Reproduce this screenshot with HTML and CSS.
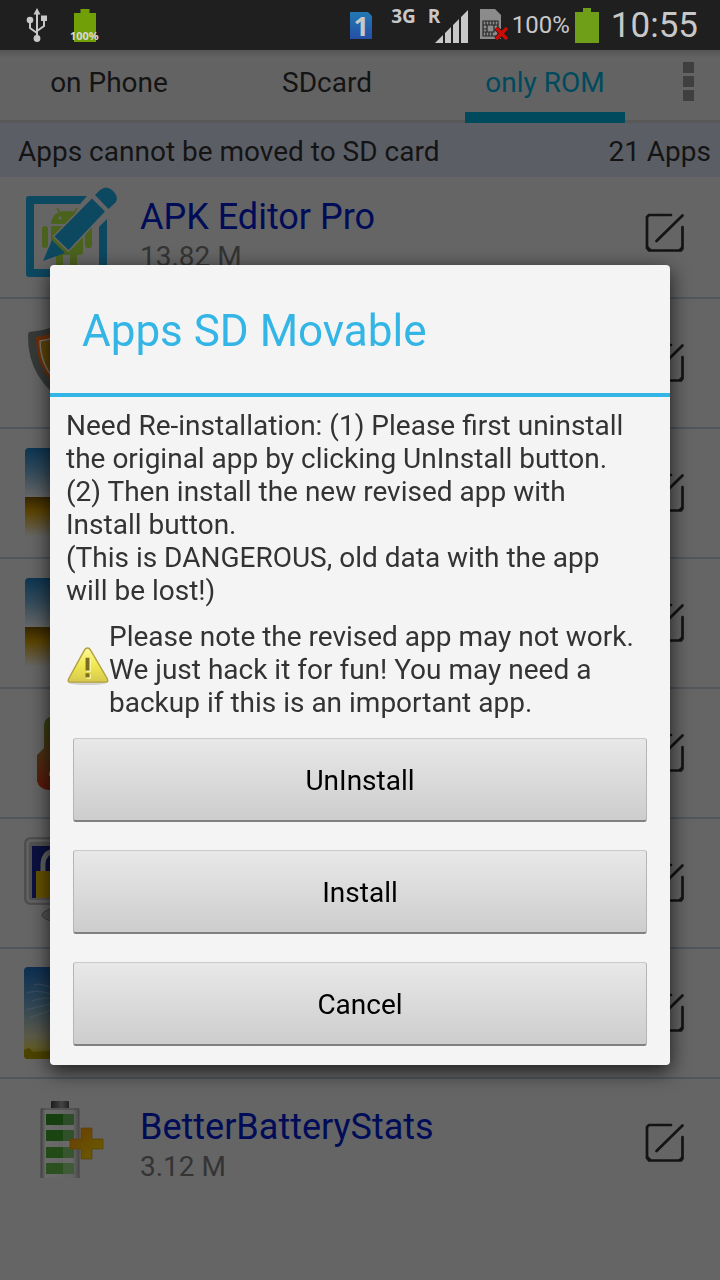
FILE: index.html
```html
<!DOCTYPE html>
<html lang="en">
<head>
    <meta charset="UTF-8">
    <meta name="viewport" content="width=device-width, initial-scale=1">
    <title>Apps SD Movable</title>
    <link rel="stylesheet" href="styles.css">
</head>
<body>
    <!-- shared symbols -->
    <svg class="defs" width="0" height="0" aria-hidden="true">
        <defs>
            <linearGradient id="g-sky" x1="0" y1="0" x2="0" y2="1">
                <stop offset="0" stop-color="#0d3552"/>
                <stop offset=".5" stop-color="#344b5b"/>
                <stop offset="1" stop-color="#666"/>
            </linearGradient>
            <linearGradient id="g-sand" x1="0" y1="0" x2="0" y2="1">
                <stop offset="0" stop-color="#352600"/>
                <stop offset=".35" stop-color="#5a4200"/>
                <stop offset="1" stop-color="#666"/>
            </linearGradient>
        </defs>
        <symbol id="i-edit" viewBox="0 0 40 40">
            <path d="M26 2H4L2 4V35L4 37.500H36L37.500 35.500V14M11.500 28L37.500 2.500" fill="none" stroke="#141414" stroke-width="2.700" stroke-linecap="round" stroke-linejoin="round"/>
            <path d="M3 33L7 37H3ZM37 33L33 37H37Z" fill="#141414"/>
        </symbol>
        <symbol id="i-photo" viewBox="0 0 96 96">
            <path d="M1 52V7Q1 3 5 3H89Q93 3 93 7V52Z" fill="url(#g-sky)"/>
            <path d="M1 52H93V88Q93 92 89 92H5Q1 92 1 88Z" fill="url(#g-sand)"/>
        </symbol>
    </svg>

    <header class="status-bar">
        <div class="status-group">
            <svg class="usb" viewBox="0 0 22 36" width="22" height="36">
                <path d="M11 6V31M11 26L4 21V14M11 24L18 19V12" fill="none" stroke="#c8c8c8" stroke-width="2"/>
                <path d="M11 1L14.500 7.500H7.500Z" fill="#c8c8c8"/>
                <circle cx="4" cy="13" r="3.300" fill="#c8c8c8"/>
                <rect x="15" y="8.500" width="6" height="5.500" fill="#c8c8c8"/>
                <circle cx="11" cy="31.500" r="3.400" fill="#c8c8c8"/>
            </svg>
            <div class="charge">
                <svg viewBox="0 0 22 33" width="22" height="33"><path d="M6.500 0H15.500V4H22V33H0V4H6.500Z" fill="#709f07"/></svg>
                <span>100%</span>
            </div>
        </div>
        <div class="status-group status-right">
            <div class="sim-one">
                <svg viewBox="0 0 22 29" width="22" height="29">
                    <defs><linearGradient id="g-sim" x1="0" y1="0" x2="0" y2="1"><stop offset="0" stop-color="#2278b4"/><stop offset="1" stop-color="#254fa6"/></linearGradient></defs>
                    <path d="M0 1H18L22 5V28H0Z" fill="url(#g-sim)"/>
                </svg>
                <span>1</span>
            </div>
            <span class="net">3G</span>
            <div class="signal">
                <span class="net">R</span>
                <svg viewBox="0 0 33 33" width="33" height="33">
                    <path d="M0 33L8 25V33ZM10 23L16 17V33H10ZM18 15L24 9V33H18ZM26 7L33 0V33H26Z" fill="#c8c8c8"/>
                </svg>
            </div>
            <svg class="sim-off" viewBox="0 0 28 32" width="28" height="32">
                <path d="M0 0H15L21 6V30H0Z" fill="#8b8b8b"/>
                <path d="M3 12H18V27H3ZM7 16V23H14V16ZM6 12V16M9 12V16M12 12V16M15 12V16M6 23V27M9 23V27M12 23V27M3 16H7M3 20H7M3 23H7M14 16H18" fill="none" stroke="#262626" stroke-width="1.200"/>
                <path d="M16 19L27 30M27 19L16 30" stroke="#1f1f1f" stroke-width="5"/>
                <path d="M16 19L27 30M27 19L16 30" stroke="#cb0b06" stroke-width="3.500"/>
            </svg>
            <span class="percent">100%</span>
            <svg class="battery" viewBox="0 0 24 35" width="24" height="35"><path d="M8 0H16V4H24V35H0V4H8Z" fill="#6f9f18"/></svg>
            <time class="clock">10:55</time>
        </div>
    </header>

    <nav class="tab-bar">
        <div class="tabs">
            <a href="#phone">on Phone</a>
            <a href="#sdcard">SDcard</a>
            <a href="#rom" class="active">only ROM</a>
        </div>
        <button class="overflow" type="button" aria-label="More options"><i></i><i></i><i></i></button>
    </nav>

    <main>
        <div class="summary">
            <span>Apps cannot be moved to SD card</span>
            <span>21 Apps</span>
        </div>
        <ul class="app-list">
            <li>
                <svg class="app-icon" viewBox="0 0 96 96">
                    <g fill="#4b621d">
                        <path d="M27 39Q28 26 43 26Q57 26 58 39Z"/>
                        <path d="M33 23L37 29M53 23L49 29" stroke="#4b621d" stroke-width="1.500"/>
                        <rect x="18" y="41" width="6" height="22" rx="3"/>
                        <rect x="61" y="41" width="7" height="22" rx="3"/>
                        <path d="M27 41H59V67Q59 70 56 70H53V84H46V70H39V84H32V70H30Q27 70 27 67Z"/>
                    </g>
                    <circle cx="36" cy="33" r="1.500" fill="#666"/>
                    <path d="M63 11H5Q2 11 2 14V89Q2 92 5 92H80Q83 92 83 89V34L75 42V84H10V19H56Z" fill="#0d4861"/>
                    <path d="M30.500 51.500L68 13.500L81 26.500L44.500 65Z" fill="#0d4861" stroke="#666" stroke-width="3" paint-order="stroke"/>
                    <path d="M19 76L28 55L41 68Z" fill="#0d4861"/>
                    <path d="M71 10L76 5Q82 0 88 5Q95 11 92 17L84.500 24Z" fill="#0d4861"/>
                </svg>
                <div class="app-text"><a href="#apk-editor">APK Editor Pro</a><span>13.82 M</span></div>
                <button class="edit" type="button" aria-label="Edit"><svg width="40" height="40"><use href="#i-edit"/></svg></button>
            </li>
            <li>
                <svg class="app-icon" viewBox="0 0 96 96">
                    <path d="M5 17Q18 16 30 12L48 3L66 12Q78 16 91 17Q93 65 48 92Q3 66 4 20Z" fill="#363a37"/>
                    <path d="M12 22Q28 20 48 10Q68 20 84 22Q84 62 48 85Q12 62 12 22Z" fill="#6f3009"/>
                    <path d="M16 26Q31 24 48 15Q65 24 80 26Q80 59 48 79Q16 59 16 26Z" fill="#5d4408" stroke="#77736c" stroke-width="1.500"/>
                </svg>
                <button class="edit" type="button" aria-label="Edit"><svg width="40" height="40"><use href="#i-edit"/></svg></button>
            </li>
            <li>
                <svg class="app-icon"><use href="#i-photo"/></svg>
                <button class="edit" type="button" aria-label="Edit"><svg width="40" height="40"><use href="#i-edit"/></svg></button>
            </li>
            <li>
                <svg class="app-icon"><use href="#i-photo"/></svg>
                <button class="edit" type="button" aria-label="Edit"><svg width="40" height="40"><use href="#i-edit"/></svg></button>
            </li>
            <li>
                <svg class="app-icon" viewBox="0 0 96 96">
                    <defs><linearGradient id="g-fruit" x1="0" y1="0" x2="0" y2="1"><stop offset="0" stop-color="#34450f"/><stop offset=".5" stop-color="#4b3012"/><stop offset="1" stop-color="#5c170a"/></linearGradient></defs>
                    <path d="M20 20Q20 14 26 12H66Q76 14 76 22V43L83 50V76Q80 85 72 85H24Q15 84 13 76V50L20 43Z" fill="url(#g-fruit)"/>
                    <path d="M25 67H30V71H25Z" fill="#777"/>
                </svg>
                <button class="edit" type="button" aria-label="Edit"><svg width="40" height="40"><use href="#i-edit"/></svg></button>
            </li>
            <li>
                <svg class="app-icon" viewBox="0 0 96 96">
                    <ellipse cx="46" cy="80" rx="28" ry="8" fill="#555" stroke="#3c3c3c"/>
                    <rect x="1" y="3" width="92" height="66" rx="5" fill="#5b5b5b" stroke="#484848" stroke-width="1.500"/>
                    <rect x="4" y="6" width="86" height="60" rx="3" fill="#515151" stroke="#6e6e6e"/>
                    <rect x="8" y="11" width="78" height="52" fill="#0b1040"/>
                    <path d="M19 38V29Q20 16 32 16Q44 16 44 29V38" fill="none" stroke="#626262" stroke-width="5"/>
                    <rect x="12" y="36" width="40" height="27" fill="#665200"/>
                </svg>
                <button class="edit" type="button" aria-label="Edit"><svg width="40" height="40"><use href="#i-edit"/></svg></button>
            </li>
            <li>
                <svg class="app-icon" viewBox="0 0 96 96">
                    <defs><linearGradient id="g-dawn" x1="0" y1="0" x2="0" y2="1"><stop offset="0" stop-color="#0d2f52"/><stop offset=".4" stop-color="#2f4655"/><stop offset=".75" stop-color="#5b5949"/><stop offset=".88" stop-color="#605b28"/><stop offset="1" stop-color="#4c4300"/></linearGradient></defs>
                    <rect x="0" y="2" width="92" height="92" rx="4" fill="url(#g-dawn)"/>
                    <path d="M10 20Q16 18 26 22M3 28Q14 24 26 29M8 36Q18 32 28 34M2 45L26 39M5 53L27 45" fill="none" stroke="#667078" stroke-width="1.500" opacity=".25"/>
                    <path d="M0 85L5 83L9 87L26 86L92 88V90Q92 94 88 94H4Q0 94 0 90Z" fill="#4c4300"/>
                </svg>
                <button class="edit" type="button" aria-label="Edit"><svg width="40" height="40"><use href="#i-edit"/></svg></button>
            </li>
            <li>
                <svg class="app-icon" viewBox="0 0 96 96">
                    <defs>
                        <linearGradient id="g-cell" x1="0" y1="0" x2="1" y2="0"><stop offset="0" stop-color="#444"/><stop offset=".12" stop-color="#6b6b6b"/><stop offset=".85" stop-color="#626262"/><stop offset="1" stop-color="#4a4a4a"/></linearGradient>
                        <linearGradient id="g-plus" x1="0" y1="0" x2="1" y2="1"><stop offset="0" stop-color="#693c04"/><stop offset="1" stop-color="#695f00"/></linearGradient>
                        <linearGradient id="g-cap" x1="0" y1="0" x2="1" y2="0"><stop offset="0" stop-color="#1c1c1c"/><stop offset=".6" stop-color="#444"/><stop offset="1" stop-color="#222"/></linearGradient>
                    </defs>
                    <rect x="27" y="6" width="18" height="8" rx="1" fill="url(#g-cap)"/>
                    <rect x="17" y="13" width="38" height="70" fill="url(#g-cell)"/>
                    <path d="M17 83V14H55V83" fill="none" stroke="#434343"/>
                    <path d="M22 19H50V30H22Z" fill="#153f0e"/>
                    <path d="M22 35H50V46H22Z" fill="#1a4411"/>
                    <path d="M22 52H50V63H22Z" fill="#224b18"/>
                    <path d="M22 68H50V79H22Z" fill="#2c5020"/>
                    <path d="M39 19H50V79H39Z" fill="#777" opacity=".25"/>
                    <path d="M57 33H68V44H79V54H68V64H57V54H46V44H57Z" fill="url(#g-plus)" stroke="#59400a" stroke-width=".7"/>
                </svg>
                <div class="app-text"><a href="#better-battery">BetterBatteryStats</a><span>3.12 M</span></div>
                <button class="edit" type="button" aria-label="Edit"><svg width="40" height="40"><use href="#i-edit"/></svg></button>
            </li>
        </ul>
    </main>

    <div class="overlay">
        <section class="dialog" role="dialog" aria-labelledby="dialog-title">
            <h1 id="dialog-title">Apps SD Movable</h1>
            <div class="message">
                <p>Need Re-installation: (1) Please first uninstall the original app by clicking UnInstall button.<br>(2) Then install the new revised app with Install button.<br>(This is DANGEROUS, old data with the app will be lost!)</p>
                <div class="warning">
                    <svg viewBox="0 0 44 44" width="43" height="43">
                        <defs><linearGradient id="g-warn" x1="0" y1="0" x2="0" y2="1"><stop offset="0" stop-color="#fdf99a"/><stop offset=".5" stop-color="#f1e94f"/><stop offset="1" stop-color="#d5c84e"/></linearGradient></defs>
                        <ellipse cx="22" cy="39" rx="19" ry="2" fill="#d2d2d2"/>
                        <path d="M22 3Q24 3 25 5L42 34Q44 38 41 38H4Q1 38 3 34L19 5Q20 3 22 3Z" fill="url(#g-warn)" stroke="#b3a047" stroke-width="1.500"/>
                        <path d="M20 13H24V26H20ZM20 29H24V33H20Z" fill="#7e6c1f"/>
                        <path d="M25 14V27H21M25 30V34H21" fill="none" stroke="#fbf6b5"/>
                    </svg>
                    <p>Please note the revised app may not work. We just hack it for fun! You may need a backup if this is an important app.</p>
                </div>
            </div>
            <div class="actions">
                <button type="button">UnInstall</button>
                <button type="button">Install</button>
                <button type="button">Cancel</button>
            </div>
        </section>
    </div>
</body>
</html>
```
FILE: styles.css
```css
* {
    box-sizing: border-box;
}
body {
    margin: 0;
    min-height: 100vh;
    background: #656565;
    color: #141414;
    font-family: Roboto, "Noto Sans", sans-serif;
    font-size: 28px;
    line-height: 33px;
}
a {
    color: inherit;
    text-decoration: none;
}
button {
    font: inherit;
    border: 0;
    padding: 0;
    background: none;
    cursor: pointer;
}
svg {
    display: block;
    flex: none;
}
.defs {
    position: absolute;
}

/* status bar */
.status-bar {
    display: flex;
    justify-content: space-between;
    height: 50px;
    padding: 0 22px 0 26px;
    background: #1f1f1f;
    color: #c8c8c8;
}
.status-group {
    display: flex;
    align-items: center;
}
.charge {
    position: relative;
    margin-left: 26px;
}
.charge span {
    position: absolute;
    left: -4px;
    bottom: 0;
    font: bold 11px/12px "Open Sans", sans-serif;
    color: #d8d8d8;
}
.net {
    align-self: flex-start;
    margin-top: 6px;
    font: bold 19px/20px "Open Sans", sans-serif;
}
.sim-one {
    position: relative;
    margin-right: 19px;
}
.sim-one span {
    position: absolute;
    inset: 0;
    text-align: center;
    font: bold 27px/29px "Noto Sans", sans-serif;
}
.signal {
    position: relative;
    margin: 2px 12px 0 19px;
}
.signal .net {
    position: absolute;
    top: -10px;
    left: -7px;
}
.percent {
    margin-left: 4px;
    font-size: 24px;
}
.battery {
    margin: 0 12px 0 5px;
}
.clock {
    font-size: 35px;
}
.percent, .clock {
    padding-top: 1px;
}

/* tabs */
.tab-bar {
    display: flex;
    height: 73px;
    padding-left: 29px;
    border-bottom: 3px solid #585858;
    background: linear-gradient(#555, #636363 8px);
}
.tabs {
    flex: 1;
    display: flex;
    justify-content: space-between;
}
.tabs a {
    width: 160px;
    height: 73px;
    padding-top: 16px;
    text-align: center;
}
.tabs .active {
    color: #004a5e;
    border-bottom: 11px solid #004a5e;
}
.overflow {
    display: flex;
    flex-direction: column;
    align-items: center;
    gap: 3px;
    width: 95px;
    padding: 12px 0 0 31px;
}
.overflow i {
    width: 11px;
    height: 11px;
    background: #3f3f3f;
}

/* app list */
.summary {
    display: flex;
    justify-content: space-between;
    height: 54px;
    padding: 12px 9px 0 18px;
    background: #5b5f65;
}
.app-list {
    margin: -8px 0 0;
    padding: 0;
    list-style: none;
}
.app-list li {
    display: flex;
    align-items: center;
    height: 130px;
    padding: 0 35px 0 24px;
    border-bottom: 2px solid #51565b;
}
.app-list li:last-child {
    border-bottom-color: transparent;
}
.app-icon {
    width: 96px;
    height: 96px;
}
.app-text {
    display: flex;
    flex-direction: column;
    margin-left: 20px;
    color: #343434;
}
.app-text a {
    font-size: 36px;
    line-height: 46px;
    color: #000c57;
}
.edit {
    margin-left: auto;
}

/* dialog */
.overlay {
    position: fixed;
    top: 50px;
    right: 0;
    bottom: 0;
    left: 0;
    display: flex;
    align-items: center;
    justify-content: center;
    padding: 0 50px;
}
.dialog {
    width: 100%;
    background: #f4f4f4;
    border-radius: 4px;
    box-shadow: 0 6px 20px rgba(0, 0, 0, .75);
    color: #333;
}
.dialog h1 {
    margin: 0;
    padding: 40px 32px 36px;
    border-bottom: 4px solid #33b5e5;
    color: #33b5e5;
    font-size: 44px;
    font-weight: normal;
    line-height: 52px;
}
.message {
    padding: 12px 30px 0 16px;
}
.message p {
    margin: 0;
}
.warning {
    display: flex;
    align-items: center;
    margin-top: 13px;
}
.warning svg {
    margin-bottom: 6px;
}
.actions {
    display: flex;
    flex-direction: column;
    gap: 28px;
    padding: 19px 23px;
}
.actions button {
    height: 84px;
    padding-top: 2px;
    border: 1px solid #b5b5b5;
    border-top-color: #cacaca;
    border-bottom: 2px solid #808080;
    border-radius: 3px;
    background: linear-gradient(#e8e8e8, #cdcdcd);
    color: #000;
}
```
